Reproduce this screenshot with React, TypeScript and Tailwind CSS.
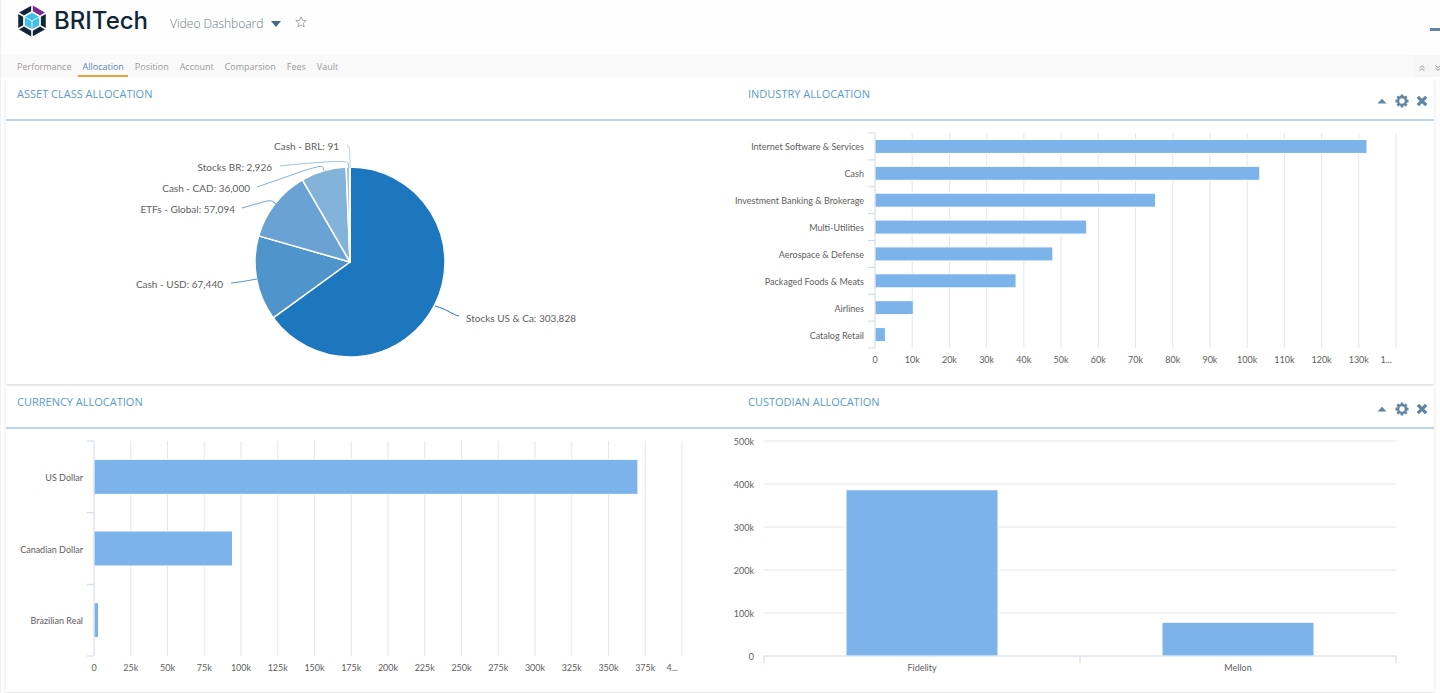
import React, { useState } from 'react';

const tabs = ['Performance', 'Allocation', 'Position', 'Account', 'Comparsion', 'Fees', 'Vault'];

const industries = [
  { name: 'Internet Software & Services', value: 132200 },
  { name: 'Cash', value: 103400 },
  { name: 'Investment Banking & Brokerage', value: 75400 },
  { name: 'Multi-Utilities', value: 56900 },
  { name: 'Aerospace & Defense', value: 47800 },
  { name: 'Packaged Foods & Meats', value: 37900 },
  { name: 'Airlines', value: 10300 },
  { name: 'Catalog Retail', value: 2800 },
];

const currencies = [
  { name: 'US Dollar', value: 370000 },
  { name: 'Canadian Dollar', value: 94200 },
  { name: 'Brazilian Real', value: 3100 },
];

const custodians = [
  { name: 'Fidelity', value: 386500 },
  { name: 'Mellon', value: 78500 },
];

// x and y place the label, line is the connector from the label to the slice
const assets = [
  { name: 'Stocks US & Ca', value: 303828, color: '#1c77bf', x: 460, y: 201, anchor: 'start', line: 'M453 195 C447 194 441 188 429 185' },
  { name: 'Cash - USD', value: 67440, color: '#4f95cc', x: 217, y: 167, anchor: 'end', line: 'M225 162 C234 161 240 160 251 158' },
  { name: 'ETFs - Global', value: 57094, color: '#6aa3d3', x: 229, y: 92, anchor: 'end', line: 'M236 87 C262 80 264 77 270 83' },
  { name: 'Cash - CAD', value: 36000, color: '#84b3da', x: 244, y: 71, anchor: 'end', line: 'M251 66 L300 49 C317 44 317 44 318 50' },
  { name: 'Stocks BR', value: 2926, color: '#9fc4e2', x: 266, y: 50, anchor: 'end', line: 'M274 45 C310 41 342 39 342 42 L343 47' },
  { name: 'Cash - BRL', value: 91, color: '#b4d1e9', x: 333, y: 29, anchor: 'end', line: 'M341 24 C344 24 344 33 344 47' },
] as const;

const chartText = "fill-[#606060] font-['Lato',sans-serif] text-[9px]";

const formatK = (n: number) => (n === 0 ? '0' : n / 1000 + 'k');

interface Item {
  name: string;
  value: number;
}

function BarChart({ title, data, left, right, max, step, barHeight, lastTick }: {
  title: string; data: Item[]; left: number; right: number; max: number; step: number; barHeight: number; lastTick: string;
}) {
  const top = 12;
  const bottom = 227;
  const row = (bottom - top) / data.length;
  const scale = (right - left) / max;
  const ticks = Array.from({ length: max / step + 1 }, (_, i) => i * step);

  return (
    <svg viewBox="0 0 714 263" className="block w-full" role="img" aria-label={title}>
      {ticks.slice(1).map((t) => (
        <line key={t} x1={left + t * scale} x2={left + t * scale} y1={top} y2={bottom} stroke="#e6e6e6" />
      ))}
      {data.map((d, i) => (
        <g key={d.name}>
          <rect
            x={left}
            y={top + row * (i + 0.5) - barHeight / 2}
            width={d.value * scale}
            height={barHeight}
            fill="#7cb3eb"
            stroke="#fff"
          />
          <text x={left - 11} y={top + row * (i + 0.5) + 4} textAnchor="end" className={chartText}>{d.name}</text>
        </g>
      ))}
      <line x1={left} x2={left} y1={top} y2={bottom} stroke="#ccd6eb" />
      {Array.from({ length: data.length + 1 }, (_, i) => (
        <line key={i} x1={left - 7} x2={left} y1={top + row * i} y2={top + row * i} stroke="#ccd6eb" />
      ))}
      {ticks.map((t) => (
        <text
          key={t}
          x={t === max ? right - 4 : left + t * scale}
          y={bottom + 15}
          textAnchor={t === max ? 'end' : 'middle'}
          className={chartText}
        >
          {t === max ? lastTick : formatK(t)}
        </text>
      ))}
    </svg>
  );
}

function ColumnChart({ title, data }: { title: string; data: Item[] }) {
  const left = 44;
  const right = 676;
  const top = 12;
  const bottom = 227;
  const max = 500000;
  const col = (right - left) / data.length;
  const y = (v: number) => bottom - (v / max) * (bottom - top);

  return (
    <svg viewBox="0 0 714 263" className="block w-full" role="img" aria-label={title}>
      {[0, 100000, 200000, 300000, 400000, 500000].map((t) => (
        <g key={t}>
          {t > 0 && <line x1={left} x2={right} y1={y(t)} y2={y(t)} stroke="#e6e6e6" />}
          <text x={left - 10} y={y(t) + 4} textAnchor="end" className={chartText}>{formatK(t)}</text>
        </g>
      ))}
      {data.map((d, i) => (
        <g key={d.name}>
          <rect
            x={left + col * (i + 0.5) - 76}
            y={y(d.value)}
            width={152}
            height={bottom - y(d.value)}
            fill="#7cb3eb"
            stroke="#fff"
          />
          <text x={left + col * (i + 0.5)} y={bottom + 15} textAnchor="middle" className={chartText}>{d.name}</text>
        </g>
      ))}
      <path d={`M${left} 234 V227 H${right} V234 M${left + col} 227 V234`} fill="none" stroke="#ccd6eb" />
    </svg>
  );
}

function PieChart({ title }: { title: string }) {
  const cx = 344;
  const cy = 141;
  const r = 95;
  const total = assets.reduce((sum, a) => sum + a.value, 0);
  const point = (v: number) => {
    const angle = (v / total) * Math.PI * 2;
    return `${cx + r * Math.sin(angle)} ${cy - r * Math.cos(angle)}`;
  };
  let sum = 0;

  return (
    <svg viewBox="0 0 714 263" className="block w-full" role="img" aria-label={title}>
      {assets.map((a) => {
        const start = sum;
        sum += a.value;
        const large = a.value / total > 0.5 ? 1 : 0;
        return (
          <g key={a.name}>
            <path
              d={`M${cx} ${cy} L${point(start)} A${r} ${r} 0 ${large} 1 ${point(sum)} Z`}
              fill={a.color}
              stroke="#fff"
              strokeWidth="1.5"
              strokeLinejoin="round"
            />
            <path d={a.line} fill="none" stroke={a.color} />
            <text x={a.x} y={a.y} textAnchor={a.anchor} className="fill-[#606060] font-['Lato',sans-serif] text-[10px]">
              {a.name}: {a.value.toLocaleString('en-US')}
            </text>
          </g>
        );
      })}
    </svg>
  );
}

function Logo() {
  const segments = [0, 60, 120, 180, 240, 300];
  return (
    <svg viewBox="-16 -16 32 32" className="size-8" aria-hidden="true">
      {segments.map((deg) => (
        <path
          key={deg}
          d="M0.8 -15.4 L12.9 -8.4 L8 -5.6 L0.8 -9.8 Z"
          transform={`rotate(${deg})`}
          fill={deg === 0 ? '#7b2a8b' : '#12263a'}
        />
      ))}
      <path d="M0 -8.3 L7.2 -4.15 V4.15 L0 8.3 L-7.2 4.15 V-4.15 Z" fill="#41bfe6" />
      <path d="M0 0 V8.3 M0 0 L7.2 -4.15 M0 0 L-7.2 -4.15" stroke="#fff" strokeWidth="0.8" />
    </svg>
  );
}

function GearIcon() {
  return (
    <svg viewBox="0 0 14 14" className="size-[14px]" aria-hidden="true">
      <g fill="#6284a3">
        {[0, 45, 90, 135].map((deg) => (
          <rect key={deg} x="5.6" y="0.5" width="2.8" height="13" rx="0.5" transform={`rotate(${deg} 7 7)`} />
        ))}
        <circle cx="7" cy="7" r="5" />
      </g>
      <circle cx="7" cy="7" r="2.7" fill="#fff" />
    </svg>
  );
}

function Panel({ titles, children }: { titles: [string, string]; children: React.ReactNode }) {
  return (
    <section className="bg-white shadow-[0_2px_3px_rgba(0,0,0,0.12)]">
      <div className="flex h-[43px] border-b-2 border-[#bdd4ec] text-[11px] leading-4 text-[#5b9bcb]">
        <h2 className="w-1/2 px-[11px] pt-2">{titles[0]}</h2>
        <h2 className="flex-1 px-7 pt-2">{titles[1]}</h2>
        <div className="flex items-center gap-[7px] px-[6px] pt-1">
          <button aria-label="Collapse" className="px-px">
            <svg viewBox="0 0 10 6" className="h-[6px] w-[10px]"><path d="M0.5 5.5 L5 0.8 L9.5 5.5 Z" fill="#6284a3" /></svg>
          </button>
          <button aria-label="Settings"><GearIcon /></button>
          <button aria-label="Remove">
            <svg viewBox="0 0 12 12" className="size-3"><path d="M1.8 1.8 L10.2 10.2 M10.2 1.8 L1.8 10.2" stroke="#6284a3" strokeWidth="3.2" /></svg>
          </button>
        </div>
      </div>
      <div className="grid grid-cols-2">{children}</div>
    </section>
  );
}

function App() {
  const [active, setActive] = useState('Allocation');

  return (
    <div className="min-h-screen overflow-hidden border-l border-[#f0f0f0] bg-[#fefefe] font-['Open_Sans',sans-serif]">
      <header className="flex h-[55px] items-start pl-[15px]">
        <a href="#" className="flex items-center gap-[6px] pt-[5px] text-[#12263a]">
          <Logo />
          <span className="font-['Inter',sans-serif] text-[24px] leading-8 font-medium">BRITech</span>
        </a>
        <button className="ml-[22px] flex items-center gap-2 pt-[15px] text-[12px] leading-[18px] font-light text-[#6d7a86]">
          Video Dashboard
          <svg viewBox="0 0 10 6" className="h-[6px] w-[10px]" aria-hidden="true"><path d="M0 0 H10 L5 6 Z" fill="#3f6a93" /></svg>
        </button>
        <button aria-label="Favorite" className="ml-[14px] pt-4">
          <svg viewBox="0 0 12 12" className="size-3" fill="none" stroke="#a3a9b0">
            <path d="M6 0.9 L7.5 4.3 L11.2 4.6 L8.4 7.1 L9.2 10.8 L6 8.8 L2.8 10.8 L3.6 7.1 L0.8 4.6 L4.5 4.3 Z" />
          </svg>
        </button>
        <button aria-label="Minimize" className="ml-auto pt-7">
          <span className="block h-[3px] w-[10px] bg-[#6284a3]" />
        </button>
      </header>

      <nav className="flex h-[22px] items-stretch gap-[3px] bg-[#f9f9f9] pl-3 text-[9px] leading-4 text-[#999]">
        {tabs.map((tab) => (
          <a
            key={tab}
            href="#"
            onClick={() => setActive(tab)}
            className={tab === active ? 'border-b-2 border-[#e8a33d] px-1 pt-1 text-[#5b87bd]' : 'px-1 pt-1'}
          >
            {tab}
          </a>
        ))}
        <div className="ml-auto flex w-[26px] items-center gap-[10px] bg-[#f6f6f6] pt-1 pl-[5px]">
          <button aria-label="Collapse all" className="shrink-0">
            <svg viewBox="0 0 6 6" className="size-[6px]" fill="none" stroke="#999"><path d="M0.5 3 L3 0.8 L5.5 3 M0.5 5.8 L3 3.6 L5.5 5.8" /></svg>
          </button>
          <button aria-label="Expand all" className="shrink-0">
            <svg viewBox="0 0 6 6" className="size-[6px]" fill="none" stroke="#999"><path d="M0.5 0.5 L3 2.7 L5.5 0.5 M0.5 3.2 L3 5.4 L5.5 3.2" /></svg>
          </button>
        </div>
      </nav>

      <main className="flex flex-col gap-[2px] pt-px pr-[6px] pl-[5px]">
        <Panel titles={['ASSET CLASS ALLOCATION', 'INDUSTRY ALLOCATION']}>
          <PieChart title="Asset class allocation" />
          <BarChart title="Industry allocation" data={industries} left={155} right={676} max={140000} step={10000} barHeight={14} lastTick="1..." />
        </Panel>
        <Panel titles={['CURRENCY ALLOCATION', 'CUSTODIAN ALLOCATION']}>
          <BarChart title="Currency allocation" data={currencies} left={88} right={676} max={400000} step={25000} barHeight={35} lastTick="4..." />
          <ColumnChart title="Custodian allocation" data={custodians} />
        </Panel>
      </main>
    </div>
  );
}

export default App;
